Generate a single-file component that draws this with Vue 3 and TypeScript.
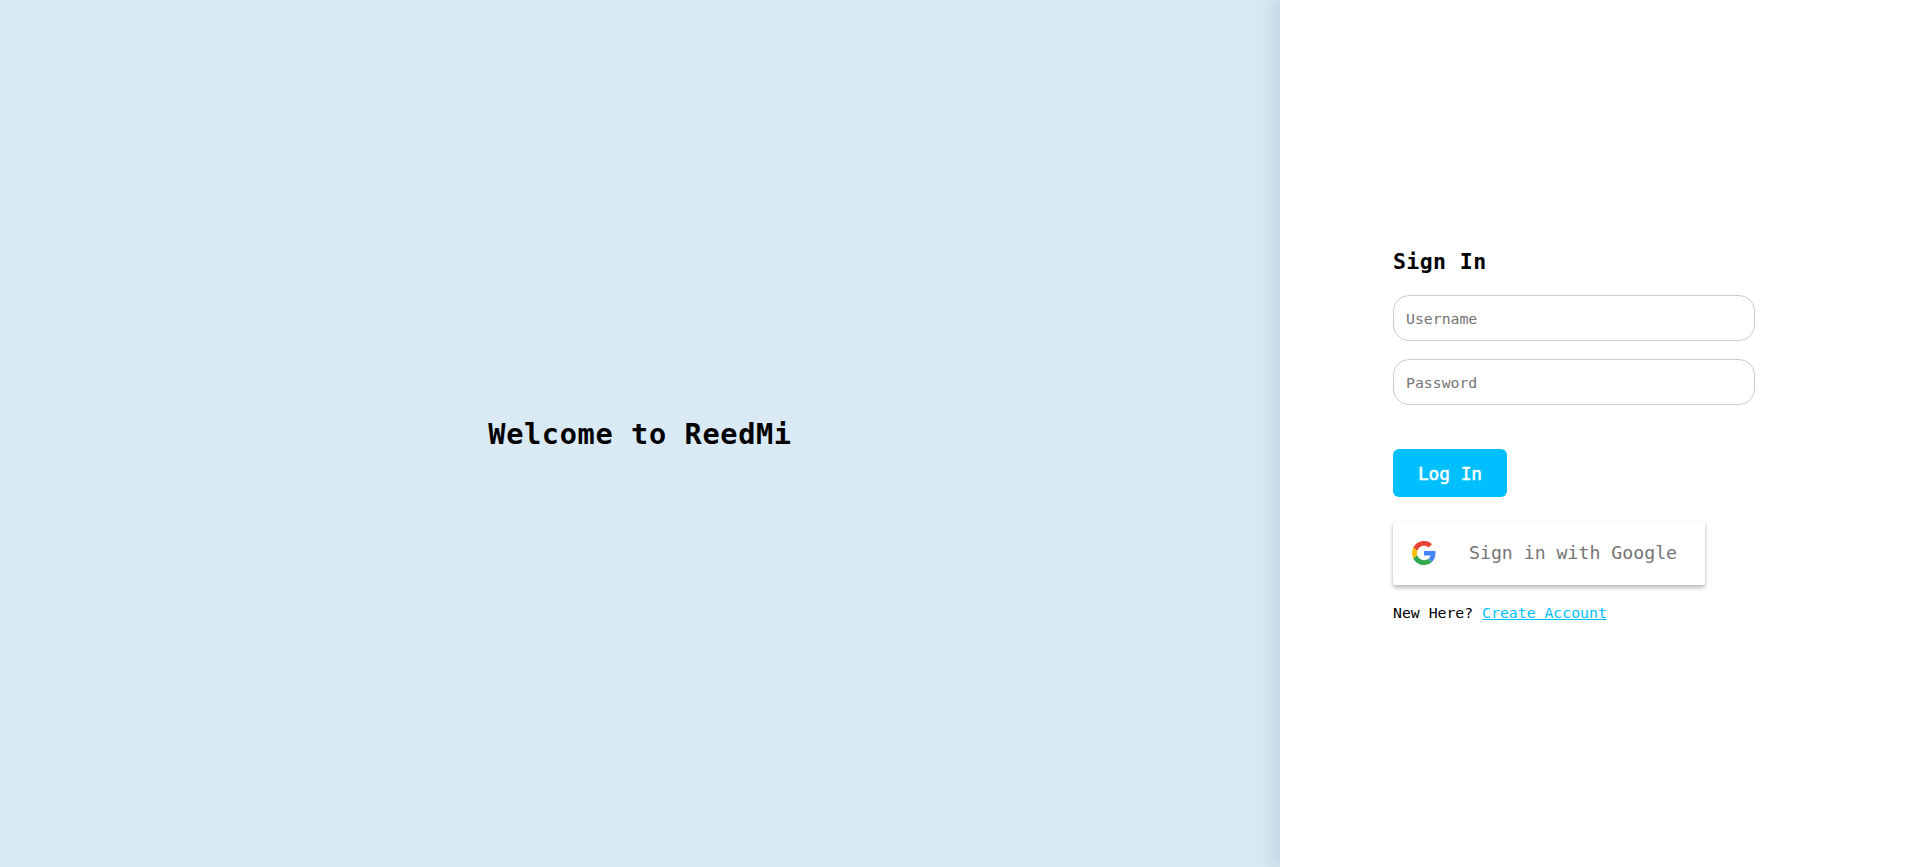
<script setup lang="ts">
import { ref } from 'vue'

const username = ref<string>('')
const password = ref<string>('')
</script>

<template>
  <div class="page">
    <section class="welcome">
      <h1>Welcome to ReedMi</h1>
    </section>
    <main class="panel">
      <form class="form" @submit.prevent>
        <h2>Sign In</h2>
        <input v-model="username" type="text" placeholder="Username" />
        <input v-model="password" type="password" placeholder="Password" />
        <button class="login" type="submit">Log In</button>
        <button class="google" type="button">
          <svg viewBox="0 0 48 48" aria-hidden="true">
            <path fill="#EA4335" d="M24 9.5c3.54 0 6.71 1.22 9.21 3.6l6.85-6.85C35.9 2.38 30.47 0 24 0 14.62 0 6.51 5.38 2.56 13.22l7.98 6.19C12.43 13.72 17.74 9.5 24 9.5z" />
            <path fill="#4285F4" d="M46.98 24.55c0-1.57-.15-3.09-.38-4.55H24v9.02h12.94c-.58 2.96-2.26 5.48-4.78 7.18l7.73 6c4.51-4.18 7.09-10.36 7.09-17.65z" />
            <path fill="#FBBC05" d="M10.53 28.59c-.48-1.45-.76-2.99-.76-4.59s.27-3.14.76-4.59l-7.98-6.19C.92 16.46 0 20.12 0 24c0 3.88.92 7.54 2.56 10.78l7.97-6.19z" />
            <path fill="#34A853" d="M24 48c6.48 0 11.93-2.13 15.89-5.81l-7.73-6c-2.15 1.45-4.92 2.3-8.16 2.3-6.26 0-11.57-4.22-13.47-9.91l-7.98 6.19C6.51 42.62 14.62 48 24 48z" />
          </svg>
          <span>Sign in with Google</span>
        </button>
        <p>New Here? <a href="#">Create Account</a></p>
      </form>
    </main>
  </div>
</template>

<style>
body {
  margin: 0;
  overflow: hidden;
}
</style>

<style scoped>
.page {
  display: grid;
  grid-template-columns: 2fr 1fr;
  height: 100vh;
  font-family: Consolas, "DejaVu Sans Mono", monospace;
  font-size: 14.8px;
  color: #000;
  background: #fff;
}

.welcome {
  display: flex;
  align-items: center;
  justify-content: center;
  background: #d9eaf4;
}

h1 {
  margin: 0;
  padding-top: 1px;
  font-size: 28.6px;
  letter-spacing: 0.63px;
  line-height: 36px;
}

.panel {
  padding: 245px 0 0 113px;
  box-sizing: border-box;
  background: #fff;
  box-shadow: -10px 0 12px #c8d7e3;
}

.form {
  display: flex;
  flex-direction: column;
  align-items: flex-start;
}

h2 {
  margin: 0 0 16px;
  font-size: 21.5px;
  letter-spacing: 0.42px;
  line-height: 34px;
}

input {
  width: 362px;
  height: 46px;
  margin: 0 0 18px;
  padding: 0 12px;
  box-sizing: border-box;
  border: 1px solid #ccc;
  border-radius: 16px;
  outline: none;
  background: #fff;
  font: inherit;
}

input::placeholder {
  color: #757575;
}

button {
  border: 0;
  font-family: inherit;
  cursor: pointer;
}

.login {
  width: 114px;
  height: 48px;
  margin-top: 26px;
  padding: 1px 0 0;
  border-radius: 6px;
  background: #00bfff;
  color: #fff;
  font-size: 17.75px;
  -webkit-text-stroke: 0.5px #fff;
}

.google {
  display: flex;
  align-items: center;
  width: 312px;
  height: 63px;
  margin-top: 25px;
  padding: 0 0 1px 19px;
  border-radius: 2px;
  background: #fff;
  box-shadow: 0 3px 4px 0 rgba(0, 0, 0, 0.25), 0 0 2px rgba(0, 0, 0, 0.12);
  color: #757575;
  font-size: 18.2px;
}

.google svg {
  width: 24px;
  height: 24px;
  margin-right: 33px;
}

.google span {
  padding-bottom: 1px;
  white-space: nowrap;
}

p {
  margin: 18px 0 0;
  line-height: 20px;
}

a {
  color: #00bfff;
}
</style>
